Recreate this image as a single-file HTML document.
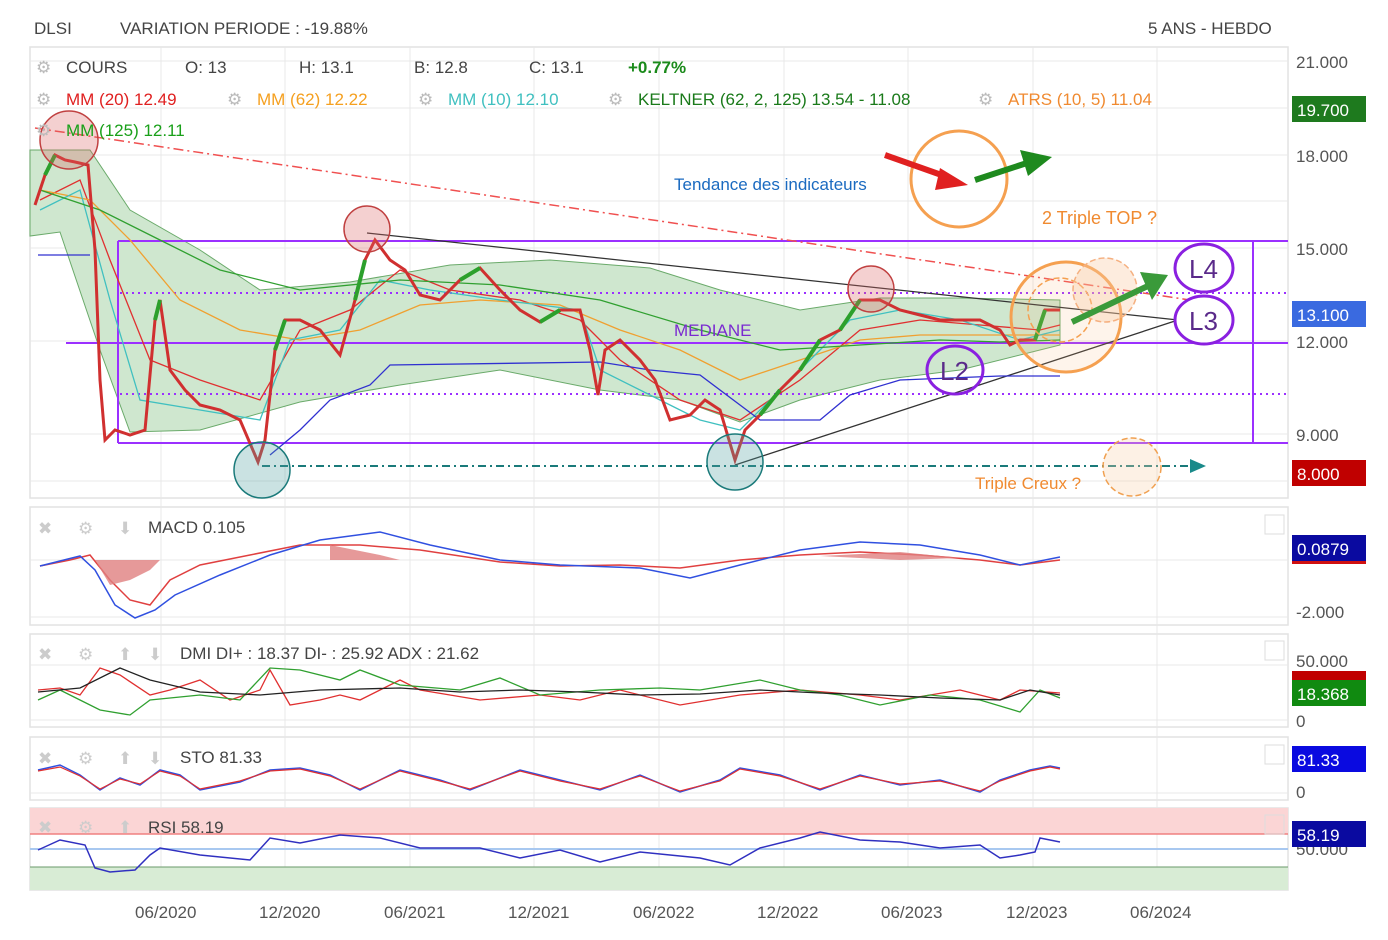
<!DOCTYPE html>
<html><head><meta charset="utf-8"><style>
body{margin:0;background:#fff;width:1388px;height:940px;overflow:hidden;font-family:"Liberation Sans",sans-serif;}
svg{display:block}
</style></head><body>
<svg width="1388" height="940" viewBox="0 0 1388 940" xmlns="http://www.w3.org/2000/svg" font-family="Liberation Sans, sans-serif">
<!-- header -->
<text x="34" y="34" font-size="17" fill="#444">DLSI</text>
<text x="120" y="34" font-size="17" fill="#444">VARIATION PERIODE : -19.88%</text>
<text x="1148" y="34" font-size="17" fill="#444">5 ANS - HEBDO</text>

<!-- panel frames -->
<g fill="none" stroke="#e2e2e2" stroke-width="1.5">
<rect x="30" y="47" width="1258" height="451"/>
<rect x="30" y="507" width="1258" height="118"/>
<rect x="30" y="634" width="1258" height="93"/>
<rect x="30" y="737" width="1258" height="63"/>
<rect x="30" y="808" width="1258" height="82"/>
</g>
<!-- grid -->
<g stroke="#e8e8e8" stroke-width="1">
<path d="M161 47V890M285 47V890M410 47V890M534 47V890M659 47V890M784 47V890M908 47V890M1033 47V890M1157 47V890"/>
<path d="M30 61H1288M30 108H1288M30 155H1288M30 201H1288M30 248H1288M30 341H1288M30 434H1288M30 481H1288"/>
<path d="M30 560H1288M30 617H1288M30 665H1288M30 720H1288M30 793H1288"/>
</g>

<!-- RSI zones -->
<rect x="30" y="808" width="1258" height="26" fill="#fbd5d5"/>
<line x1="30" y1="834" x2="1288" y2="834" stroke="#f08080" stroke-width="1.5"/>
<rect x="30" y="867" width="1258" height="23" fill="#d8ecd5"/>
<line x1="30" y1="867" x2="1288" y2="867" stroke="#6a9a6a" stroke-width="1"/>
<line x1="30" y1="849" x2="1288" y2="849" stroke="#a8c8f0" stroke-width="2"/>

<!-- Keltner band -->
<path d="M30 150L90 150L130 210L200 250L260 290L350 282L450 265L550 260L650 268L720 290L800 310L880 298L960 298L1060 300L1060 345L960 370L880 380L800 400L740 422L680 400L600 390L500 370L400 385L300 402L200 430L130 432L100 350L60 232L30 236Z" fill="#cfe7cf" stroke="#6aaa6a" stroke-width="1"/>

<!-- purple box -->
<g stroke="#9b30ff" fill="none" stroke-width="2">
<path d="M118 241H1288M118 443H1288M118 241V443M1253 241V443M66 343H1288"/>
<path d="M120 293H1288M120 394H1288" stroke-dasharray="2 4"/>
</g>

<!-- red dashdot trend -->
<path d="M35 128L1190 300" stroke="#f05050" stroke-width="1.5" stroke-dasharray="10 4 2 4" fill="none"/>
<!-- black lines -->
<path d="M367 233L1178 320M735 465L1178 320" stroke="#333" stroke-width="1.3" fill="none"/>
<!-- teal bottom line -->
<path d="M262 466H1190" stroke="#1a7a7a" stroke-width="2" stroke-dasharray="8 4 2 4"/>
<path d="M1190 459L1206 466L1190 473Z" fill="#1a8a8a"/>

<!-- moving averages -->
<g fill="none" stroke-width="1.3">
<path d="M40 200L80 180L110 260L150 360L200 380L260 400L300 330L350 310L400 270L450 290L520 300L580 320L620 360L680 400L740 420L800 380L860 330L920 320L980 325L1040 330L1060 325" stroke="#e03030"/>
<path d="M40 190L90 200L130 240L180 300L240 330L300 340L360 330L420 305L480 300L560 305L620 330L680 350L740 380L800 360L860 340L920 335L980 335L1060 335" stroke="#f0a030"/>
<path d="M40 210L80 190L110 300L140 400L200 410L260 420L290 340L340 330L380 280L430 290L500 300L580 310L600 370L660 400L700 420L740 430L790 380L850 320L900 310L960 320L1020 340L1060 330" stroke="#40c0c0"/>
<path d="M40 190L100 210L160 240L220 270L300 290L400 280L500 285L600 300L700 330L780 350L860 345L940 340L1000 342L1060 340" stroke="#30a030"/>
<path d="M38 255H90M270 455L300 430L330 400L370 385L390 365L600 362L650 370L700 375L760 420L820 420L850 395L900 380L1000 376L1060 376" stroke="#3030d0"/>
</g>

<!-- price -->
<path d="M35 205L45 175L55 155L65 160L75 162L88 165L95 250L100 380L105 440L115 430L130 435L145 430L155 320L160 300L170 370L185 390L200 405L220 410L240 420L258 462L265 440L275 350L285 320L300 320L320 330L340 355L355 300L365 260L375 240L390 260L405 270L420 295L440 300L460 280L480 268L500 290L520 310L540 322L560 310L580 310L590 350L598 395L605 350L620 340L640 360L655 380L670 420L690 415L705 400L720 410L735 460L745 430L760 415L780 390L800 370L820 340L840 330L860 300L880 300L900 310L920 315L940 320L960 320L980 320L1000 330L1010 345L1020 340L1035 340L1045 310L1060 310" fill="none" stroke="#d03030" stroke-width="3"/>
<path d="M45 175L55 155M155 320L160 300M275 350L285 320M355 300L365 260M460 280L480 268M540 322L560 310M760 415L780 390M800 370L820 340M840 330L860 300M1035 340L1045 310" stroke="#2ca02c" stroke-width="4"/>

<!-- circles -->
<g stroke="#c04040" stroke-width="1.5" fill="rgba(220,100,100,0.3)">
<circle cx="69" cy="140" r="29"/>
<circle cx="367" cy="229" r="23"/>
<circle cx="871" cy="289" r="23"/>
</g>
<g stroke="#1a7a7a" stroke-width="1.5" fill="rgba(80,160,160,0.3)">
<circle cx="262" cy="470" r="28"/>
<circle cx="735" cy="462" r="28"/>
</g>
<g fill="none" stroke="#f5a050" stroke-width="3">
<circle cx="1066" cy="317" r="55" fill="rgba(250,180,120,0.15)"/>
<circle cx="959" cy="179" r="48"/>
<circle cx="1060" cy="310" r="32" stroke-width="1.5" stroke-dasharray="6 3"/>
</g>
<circle cx="1105" cy="290" r="32" fill="rgba(250,200,160,0.35)" stroke="#f5b080" stroke-width="1.5" stroke-dasharray="6 3"/>
<circle cx="1132" cy="467" r="29" fill="rgba(250,210,170,0.3)" stroke="#f0a050" stroke-width="1.5" stroke-dasharray="6 3"/>
<g fill="#fff" stroke="#8a20e0" stroke-width="3">
<ellipse cx="1204" cy="268" rx="29" ry="24"/>
<ellipse cx="1204" cy="320" rx="29" ry="24"/>
<ellipse cx="955" cy="370" rx="28" ry="24" fill="none"/>
</g>
<text x="1189" y="278" font-size="26" fill="#5a2a8a">L4</text>
<text x="1189" y="330" font-size="26" fill="#5a2a8a">L3</text>
<text x="940" y="380" font-size="26" fill="#5a2a8a">L2</text>

<!-- arrows -->
<path d="M885 155L950 178" stroke="#e02020" stroke-width="6"/>
<path d="M940 168L968 185L935 190Z" fill="#e02020"/>
<path d="M975 180L1030 162" stroke="#1e8a1e" stroke-width="6"/>
<path d="M1020 150L1052 157L1028 176Z" fill="#1e8a1e"/>
<path d="M1072 322L1150 285" stroke="#3a9a3a" stroke-width="6"/>
<path d="M1140 272L1168 275L1152 300Z" fill="#3a9a3a"/>

<!-- annotations -->
<text x="674" y="190" font-size="17" fill="#1a6ac0">Tendance des indicateurs</text>
<text x="1042" y="224" font-size="18" fill="#f08a30">2 Triple TOP ?</text>
<text x="975" y="489" font-size="17" fill="#f08a30">Triple Creux ?</text>
<text x="674" y="336" font-size="17" fill="#7a2ad0">MEDIANE</text>

<!-- legend -->
<g font-size="17">
<text x="36" y="73" fill="#bbb">⚙</text><text x="66" y="73" fill="#444">COURS</text>
<text x="185" y="73" fill="#444">O: 13</text><text x="299" y="73" fill="#444">H: 13.1</text>
<text x="414" y="73" fill="#444">B: 12.8</text><text x="529" y="73" fill="#444">C: 13.1</text>
<text x="628" y="73" fill="#1a8a1a" font-weight="bold">+0.77%</text>
<text x="36" y="105" fill="#bbb">⚙</text><text x="66" y="105" fill="#e02020">MM (20)  12.49</text>
<text x="227" y="105" fill="#bbb">⚙</text><text x="257" y="105" fill="#f5a020">MM (62)  12.22</text>
<text x="418" y="105" fill="#bbb">⚙</text><text x="448" y="105" fill="#40c0c0">MM (10)  12.10</text>
<text x="608" y="105" fill="#bbb">⚙</text><text x="638" y="105" fill="#1a7a1a">KELTNER (62, 2, 125)  13.54 - 11.08</text>
<text x="978" y="105" fill="#bbb">⚙</text><text x="1008" y="105" fill="#f08a30">ATRS (10, 5)  11.04</text>
<text x="36" y="136" fill="#bbb">⚙</text><text x="66" y="136" fill="#1aa01a">MM (125)  12.11</text>
</g>

<!-- right axis -->
<g font-size="17" fill="#555">
<text x="1296" y="68">21.000</text><text x="1296" y="162">18.000</text>
<text x="1296" y="255">15.000</text><text x="1296" y="348">12.000</text>
<text x="1296" y="441">9.000</text><text x="1296" y="618">-2.000</text>
<text x="1296" y="667">50.000</text><text x="1296" y="727">0</text><text x="1296" y="798">0</text>
<text x="1296" y="855">50.000</text>
</g>
<rect x="1292" y="96" width="74" height="26" fill="#1e7a1e"/><text x="1297" y="116" font-size="17" fill="#fff">19.700</text>
<rect x="1292" y="301" width="74" height="26" fill="#3a6ae0"/><text x="1297" y="321" font-size="17" fill="#fff">13.100</text>
<rect x="1292" y="460" width="74" height="26" fill="#c00000"/><text x="1297" y="480" font-size="17" fill="#fff">8.000</text>
<rect x="1292" y="535" width="74" height="28" fill="#0a0aa0"/><rect x="1292" y="561" width="74" height="3" fill="#d01010"/><text x="1297" y="555" font-size="17" fill="#fff">0.0879</text>
<rect x="1292" y="671" width="74" height="10" fill="#c00000"/>
<rect x="1292" y="680" width="74" height="26" fill="#108a10"/><text x="1297" y="700" font-size="17" fill="#fff">18.368</text>
<rect x="1292" y="746" width="74" height="26" fill="#0a0ae0"/><text x="1297" y="766" font-size="17" fill="#fff">81.33</text>
<rect x="1292" y="821" width="74" height="26" fill="#0a0aa0"/><text x="1297" y="841" font-size="17" fill="#fff">58.19</text>

<!-- panel headers -->
<g font-size="17" fill="#444">
<text x="38" y="534" fill="#ccc">✖</text><text x="78" y="534" fill="#ccc">⚙</text><text x="118" y="534" fill="#ccc">⬇</text><text x="148" y="533">MACD  0.105</text>
<text x="38" y="660" fill="#ccc">✖</text><text x="78" y="660" fill="#ccc">⚙</text><text x="118" y="660" fill="#ccc">⬆</text><text x="148" y="660" fill="#ccc">⬇</text><text x="180" y="659">DMI  DI+ : 18.37 DI- : 25.92 ADX : 21.62</text>
<text x="38" y="764" fill="#ccc">✖</text><text x="78" y="764" fill="#ccc">⚙</text><text x="118" y="764" fill="#ccc">⬆</text><text x="148" y="764" fill="#ccc">⬇</text><text x="180" y="763">STO  81.33</text>
<text x="38" y="833" fill="#ccc">✖</text><text x="78" y="833" fill="#ccc">⚙</text><text x="118" y="833" fill="#ccc">⬆</text><text x="148" y="833">RSI  58.19</text>
</g>
<g fill="none" stroke="#ddd"><rect x="1265" y="515" width="19" height="19"/><rect x="1265" y="641" width="19" height="19"/><rect x="1265" y="745" width="19" height="19"/><rect x="1265" y="815" width="19" height="19"/></g>

<!-- MACD -->
<path d="M40 566L70 560L90 555L110 580L130 600L150 605L170 580L200 565L250 555L300 545L360 545L420 550L500 562L560 566L620 565L680 568L740 560L800 555L860 552L920 555L980 560L1020 565L1060 560" fill="none" stroke="#e04040" stroke-width="1.5"/>
<path d="M40 566L80 556L95 570L115 605L135 618L155 610L175 595L220 575L270 555L320 540L380 532L430 545L500 560L560 565L640 568L690 578L740 565L800 550L860 542L920 545L980 555L1020 565L1060 557" fill="none" stroke="#3050e0" stroke-width="1.5"/>
<path d="M95 560L110 585L130 580L150 570L160 560ZM330 545L380 555L400 560L330 560ZM820 556L900 552L960 558L900 560Z" fill="#e08080" opacity="0.8"/>
<!-- DMI -->
<path d="M38 690L60 688L80 695L100 668L120 675L150 695L170 690L200 680L230 700L260 690L270 670L290 705L320 700L340 695L360 700L400 680L420 690L480 700L540 695L580 700L620 690L680 705L740 695L800 690L860 695L900 700L960 690L1000 700L1020 690L1060 693" fill="none" stroke="#e03030" stroke-width="1.3"/>
<path d="M38 700L60 690L80 700L100 710L130 715L150 700L200 695L240 700L270 668L300 670L340 680L360 670L400 685L460 690L500 678L540 695L600 690L660 688L700 690L760 680L800 690L840 695L880 705L930 695L980 700L1020 712L1040 690L1060 698" fill="none" stroke="#30a030" stroke-width="1.3"/>
<path d="M38 692L80 688L120 668L150 680L200 692L260 695L320 690L400 688L460 692L520 690L580 692L640 695L700 694L760 690L820 693L880 695L940 698L1000 700L1030 690L1060 695" fill="none" stroke="#222" stroke-width="1.3"/>
<!-- STO -->
<path d="M38 770L60 765L80 775L100 790L120 778L140 785L160 770L180 775L200 790L240 782L270 770L300 768L330 775L360 790L400 770L440 780L470 790L520 770L560 780L600 790L640 775L680 792L720 780L740 768L780 775L820 790L860 775L900 785L940 780L980 792L1000 780L1030 770L1050 766L1060 768" fill="none" stroke="#3050e0" stroke-width="1.5"/>
<path d="M38 771L60 767L80 776L100 789L120 779L140 784L160 771L180 776L200 789L240 781L270 771L300 769L330 776L360 789L400 771L440 781L470 789L520 771L560 781L600 789L640 776L680 791L720 781L740 769L780 776L820 789L860 776L900 784L940 781L980 791L1000 781L1030 771L1050 767L1060 769" fill="none" stroke="#e03030" stroke-width="1.2"/>
<!-- RSI -->
<path d="M38 850L60 840L85 845L95 868L110 872L135 870L150 855L160 848L200 855L250 860L270 838L300 843L340 835L380 838L420 848L480 848L520 858L560 850L600 862L640 852L700 858L730 865L760 848L800 838L820 832L860 840L900 842L940 848L980 845L1000 858L1020 855L1035 852L1040 838L1060 842" fill="none" stroke="#3030c0" stroke-width="1.5"/>

<!-- dates -->
<g font-size="17" fill="#555">
<text x="135" y="918">06/2020</text><text x="259" y="918">12/2020</text><text x="384" y="918">06/2021</text>
<text x="508" y="918">12/2021</text><text x="633" y="918">06/2022</text><text x="757" y="918">12/2022</text>
<text x="881" y="918">06/2023</text><text x="1006" y="918">12/2023</text><text x="1130" y="918">06/2024</text>
</g>
</svg>
</body></html>
